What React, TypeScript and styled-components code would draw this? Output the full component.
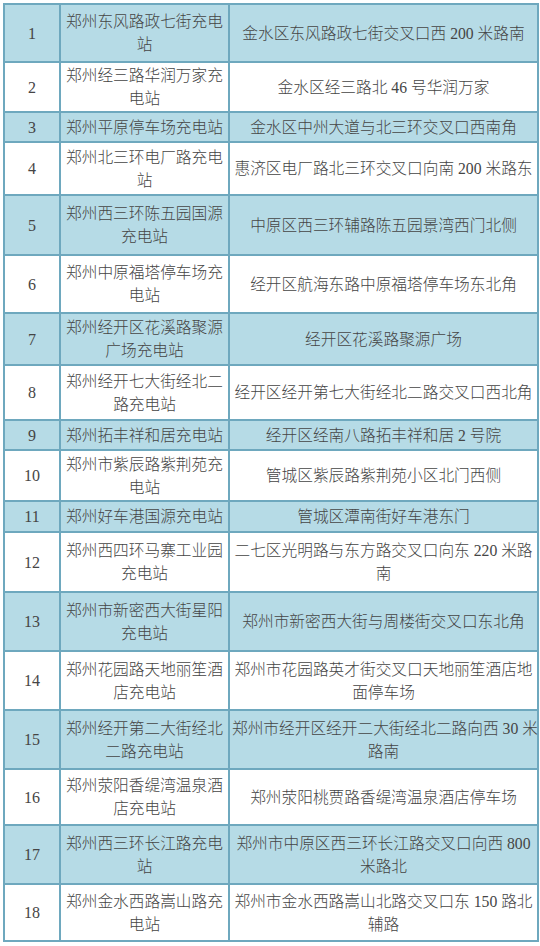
import React from "react";
import styled, { createGlobalStyle } from "styled-components";

const Global = createGlobalStyle`
  html, body { margin: 0; padding: 0; background: #ffffff; }
  body { width: 540px; }
`;

type Station = { no: number; name: string[]; addr: string[]; h: number };

const rows: Station[] = [
  { no: 1, name: ["郑州东风路政七街充电", "站"], addr: ["金水区东风路政七街交叉口西 200 米路南"], h: 58 },
  { no: 2, name: ["郑州经三路华润万家充", "电站"], addr: ["金水区经三路北 46 号华润万家"], h: 50 },
  { no: 3, name: ["郑州平原停车场充电站"], addr: ["金水区中州大道与北三环交叉口西南角"], h: 30 },
  { no: 4, name: ["郑州北三环电厂路充电", "站"], addr: ["惠济区电厂路北三环交叉口向南 200 米路东"], h: 53 },
  { no: 5, name: ["郑州西三环陈五园国源", "充电站"], addr: ["中原区西三环辅路陈五园景湾西门北侧"], h: 60 },
  { no: 6, name: ["郑州中原福塔停车场充", "电站"], addr: ["经开区航海东路中原福塔停车场东北角"], h: 58 },
  { no: 7, name: ["郑州经开区花溪路聚源", "广场充电站"], addr: ["经开区花溪路聚源广场"], h: 52 },
  { no: 8, name: ["郑州经开七大街经北二", "路充电站"], addr: ["经开区经开第七大街经北二路交叉口西北角"], h: 55 },
  { no: 9, name: ["郑州拓丰祥和居充电站"], addr: ["经开区经南八路拓丰祥和居 2 号院"], h: 30 },
  { no: 10, name: ["郑州市紫辰路紫荆苑充", "电站"], addr: ["管城区紫辰路紫荆苑小区北门西侧"], h: 51 },
  { no: 11, name: ["郑州好车港国源充电站"], addr: ["管城区潭南街好车港东门"], h: 31 },
  { no: 12, name: ["郑州西四环马寨工业园", "充电站"], addr: ["二七区光明路与东方路交叉口向东 220 米路", "南"], h: 60 },
  { no: 13, name: ["郑州市新密西大街星阳", "充电站"], addr: ["郑州市新密西大街与周楼街交叉口东北角"], h: 59 },
  { no: 14, name: ["郑州花园路天地丽笙酒", "店充电站"], addr: ["郑州市花园路英才街交叉口天地丽笙酒店地", "面停车场"], h: 59 },
  { no: 15, name: ["郑州经开第二大街经北", "二路充电站"], addr: ["郑州市经开区经开二大街经北二路向西 30 米", "路南"], h: 59 },
  { no: 16, name: ["郑州荥阳香缇湾温泉酒", "店充电站"], addr: ["郑州荥阳桃贾路香缇湾温泉酒店停车场"], h: 56 },
  { no: 17, name: ["郑州西三环长江路充电", "站"], addr: ["郑州市中原区西三环长江路交叉口向西 800", "米路北"], h: 59 },
  { no: 18, name: ["郑州金水西路嵩山路充", "电站"], addr: ["郑州市金水西路嵩山北路交叉口东 150 路北", "辅路"], h: 57 },
];

const Page = styled.div`
  padding: 3px 3px 4px 3px;
  background: #ffffff;
`;

const Table = styled.table`
  width: 534px;
  border-collapse: collapse;
  table-layout: fixed;
  border: 2px solid #6ea8be;
  font-family: "Liberation Serif", "Noto Sans CJK SC", serif;
  font-weight: 300;
  color: #454545;
`;

const Row = styled.tr<{ $alt: boolean; $h: number }>`
  height: ${(p) => p.$h}px;
  background: ${(p) => (p.$alt ? "#b6dbe6" : "#ffffff")};
`;

const Cell = styled.td<{ $w: number; $num?: boolean }>`
  width: ${(p) => p.$w}px;
  border: 2px solid #6ea8be;
  padding: 0 2px;
  text-align: center;
  vertical-align: middle;
  font-size: ${(p) => (p.$num ? "16px" : "15.7px")};
  line-height: 23px;
  box-sizing: border-box;
`;

const Line = styled.div`
  white-space: nowrap;
`;

export default function App() {
  return (
    <Page>
      <Global />
      <Table>
        <colgroup>
          <col style={{ width: 56 }} />
          <col style={{ width: 169 }} />
          <col style={{ width: 309 }} />
        </colgroup>
        <tbody>
          {rows.map((r) => (
            <Row key={r.no} $alt={r.no % 2 === 1} $h={r.h}>
              <Cell $w={56} $num>
                {r.no}
              </Cell>
              <Cell $w={169}>
                {r.name.map((l, i) => (
                  <Line key={i}>{l}</Line>
                ))}
              </Cell>
              <Cell $w={309}>
                {r.addr.map((l, i) => (
                  <Line key={i}>{l}</Line>
                ))}
              </Cell>
            </Row>
          ))}
        </tbody>
      </Table>
    </Page>
  );
}
